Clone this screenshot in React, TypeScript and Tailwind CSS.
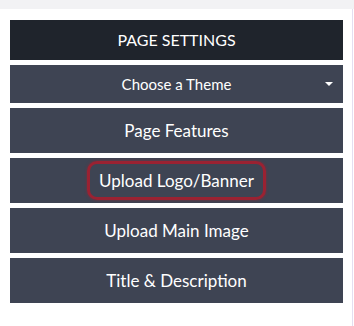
const itemClass =
  "flex h-[45px] items-center justify-center bg-[#3e4453] text-[17px] text-white";

export default function App() {
  return (
    <div className="flex h-[326px] w-[354px] flex-col bg-white font-['Lato',sans-serif]">
      <div className="h-[9px] bg-[#f2f2f4]" />
      <div className="flex w-[353px] flex-1 flex-col gap-[5px] rounded-tl-md border-r border-[#e4def0] bg-white pl-[10px] pr-[9px] pt-[11px]">
        <div className="flex h-[40px] items-center justify-center bg-[#1f242c] text-[16px] text-white">
          PAGE SETTINGS
        </div>
        <div className="relative flex h-[38px] items-center justify-center bg-[#3e4453] text-[15px] text-white">
          Choose a Theme
          <span className="absolute right-[10px] top-[17px] h-0 w-0 border-x-[4px] border-t-[4px] border-x-transparent border-t-white" />
        </div>
        <div className={itemClass}>Page Features</div>
        <div className={itemClass}>
          <span className="flex h-[39px] items-center rounded-[10px] border-[3px] border-[#9a2232] px-[9px] shadow-[0_0_3px_rgba(154,34,50,0.7)]">
            Upload Logo/Banner
          </span>
        </div>
        <div className={itemClass}>Upload Main Image</div>
        <div className={itemClass}>Title &amp; Description</div>
      </div>
    </div>
  );
}
